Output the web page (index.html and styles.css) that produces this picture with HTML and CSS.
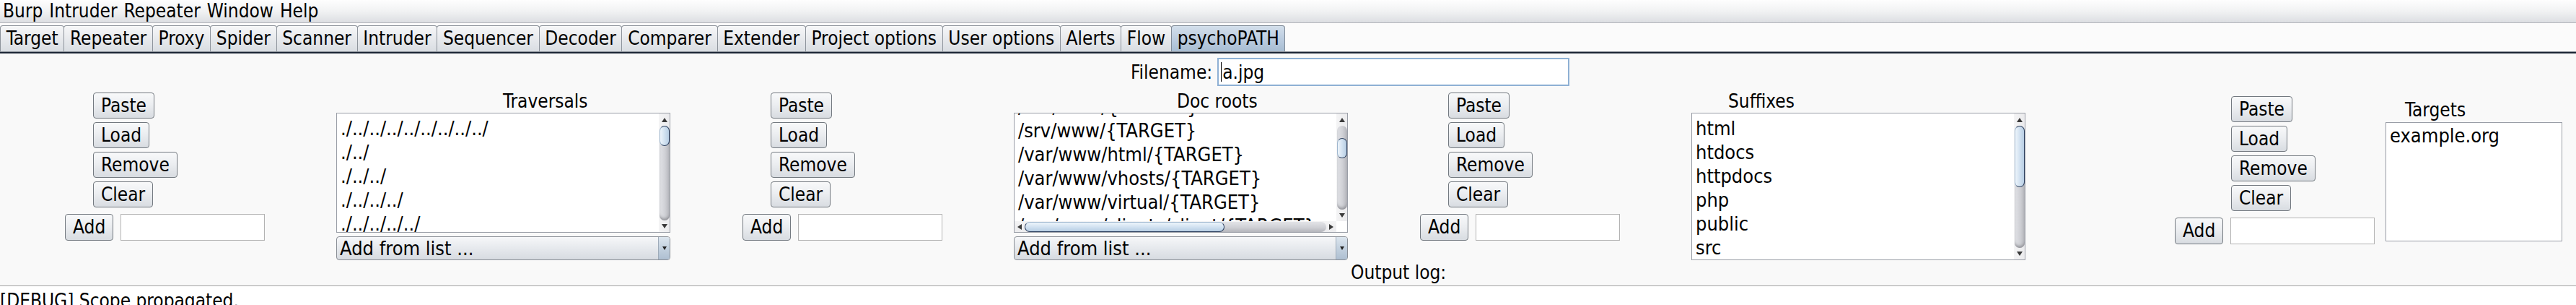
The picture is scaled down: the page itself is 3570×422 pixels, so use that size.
FILE: index.html
```html
<!DOCTYPE html>
<html lang="en">
<head>
<meta charset="utf-8">
<title>Burp Suite - psychoPATH</title>
<link rel="stylesheet" href="styles.css">
</head>
<body>
<div class="app">
  <nav class="menubar">
    <span>Burp</span><span>Intruder</span><span>Repeater</span><span>Window</span><span>Help</span>
  </nav>
  <div class="tabstrip">
    <div class="tab">Target</div>
    <div class="tab">Repeater</div>
    <div class="tab">Proxy</div>
    <div class="tab">Spider</div>
    <div class="tab">Scanner</div>
    <div class="tab">Intruder</div>
    <div class="tab">Sequencer</div>
    <div class="tab">Decoder</div>
    <div class="tab">Comparer</div>
    <div class="tab">Extender</div>
    <div class="tab">Project options</div>
    <div class="tab">User options</div>
    <div class="tab">Alerts</div>
    <div class="tab">Flow</div>
    <div class="tab active">psychoPATH</div>
  </div>
  <div class="tab-rule"></div>

  <main class="content">
    <div class="filename-row">
      <span class="filename-label">Filename:</span>
      <div class="field filename-field"><span class="caret"></span>a.jpg</div>
    </div>

    <div class="groups">
      <!-- Traversals -->
      <section class="group">
        <div class="controls">
          <div class="btn-stack">
            <div class="btn">Paste</div>
            <div class="btn">Load</div>
            <div class="btn">Remove</div>
            <div class="btn">Clear</div>
          </div>
          <div class="add-row"><div class="btn">Add</div><div class="field add-field"></div></div>
        </div>
        <div class="list-col">
          <div class="list-title title-traversals">Traversals</div>
          <div class="list list-v">
            <div class="items">
              <div class="item">./../../../../../../../../</div>
              <div class="item">./../</div>
              <div class="item">./../../</div>
              <div class="item">./../../../</div>
              <div class="item">./../../../../</div>
            </div>
            <div class="vscroll">
              <div class="arr up"></div>
              <div class="track"><div class="thumb" style="height:28px;margin-top:0px"></div></div>
              <div class="arr down"></div>
            </div>
          </div>
          <div class="combo"><span class="combo-text">Add from list ...</span><span class="combo-btn"></span></div>
        </div>
      </section>

      <!-- Doc roots -->
      <section class="group">
        <div class="controls">
          <div class="btn-stack">
            <div class="btn">Paste</div>
            <div class="btn">Load</div>
            <div class="btn">Remove</div>
            <div class="btn">Clear</div>
          </div>
          <div class="add-row"><div class="btn">Add</div><div class="field add-field"></div></div>
        </div>
        <div class="list-col">
          <div class="list-title title-docroots">Doc roots</div>
          <div class="list list-hv">
            <div class="items items-scrolled">
              <div class="item">/var/www/{TARGET}</div>
              <div class="item">/srv/www/{TARGET}</div>
              <div class="item">/var/www/html/{TARGET}</div>
              <div class="item">/var/www/vhosts/{TARGET}</div>
              <div class="item">/var/www/virtual/{TARGET}</div>
              <div class="item">/var/www/clients/client/{TARGET}</div>
            </div>
            <div class="vscroll">
              <div class="arr up"></div>
              <div class="track"><div class="thumb" style="height:28px;margin-top:17px"></div></div>
              <div class="arr down"></div>
            </div>
            <div class="hscroll">
              <div class="arr left"></div>
              <div class="htrack"><div class="hthumb" style="width:277px"></div></div>
              <div class="arr right"></div>
            </div>
            <div class="corner"></div>
          </div>
          <div class="combo"><span class="combo-text">Add from list ...</span><span class="combo-btn"></span></div>
        </div>
      </section>

      <!-- Suffixes -->
      <section class="group">
        <div class="controls">
          <div class="btn-stack">
            <div class="btn">Paste</div>
            <div class="btn">Load</div>
            <div class="btn">Remove</div>
            <div class="btn">Clear</div>
          </div>
          <div class="add-row"><div class="btn">Add</div><div class="field add-field"></div></div>
        </div>
        <div class="list-col">
          <div class="list-title title-suffixes">Suffixes</div>
          <div class="list list-v list-tall">
            <div class="items">
              <div class="item">html</div>
              <div class="item">htdocs</div>
              <div class="item">httpdocs</div>
              <div class="item">php</div>
              <div class="item">public</div>
              <div class="item">src</div>
            </div>
            <div class="vscroll">
              <div class="arr up"></div>
              <div class="track"><div class="thumb" style="height:85px;margin-top:0px"></div></div>
              <div class="arr down"></div>
            </div>
          </div>
        </div>
      </section>

      <!-- Targets -->
      <section class="group group-targets">
        <div class="controls controls-targets">
          <div class="btn-stack">
            <div class="btn">Paste</div>
            <div class="btn">Load</div>
            <div class="btn">Remove</div>
            <div class="btn">Clear</div>
          </div>
          <div class="add-row"><div class="btn">Add</div><div class="field add-field"></div></div>
        </div>
        <div class="list-col list-col-targets">
          <div class="list-title title-targets">Targets</div>
          <div class="list list-targets">
            <div class="items items-targets">
              <div class="item">example.org</div>
            </div>
          </div>
        </div>
      </section>
    </div>

    <div class="output-row">Output log:</div>
  </main>

  <div class="log">[DEBUG] Scope propagated.</div>
</div>
</body>
</html>
```

FILE: styles.css
```css
html, body {
  margin: 0;
  padding: 0;
}

body {
  width: 3570px;
  height: 422px;
  overflow: hidden;
  background: #f9f9f9;
  color: #000;
  font-family: "DejaVu Sans Condensed", "DejaVu Sans", sans-serif;
  font-size: 26px;
}

.app {
  display: flex;
  flex-direction: column;
  height: 422px;
}

/* ---------- menu bar ---------- */
.menubar {
  height: 31px;
  border-bottom: 1px solid #b4b7bc;
  background: linear-gradient(to bottom, #fefefe 0%, #f1f2f3 50%, #dcdee2 100%);
  display: flex;
  align-items: center;
  gap: 9px;
  padding-left: 4px;
  line-height: 31px;
}

/* ---------- tabs ---------- */
.tabstrip {
  height: 36px;
  padding-top: 3px;
  padding-left: 1px;
  background: #fbfbfb;
  border-bottom: 1px solid #8b9199;
  display: flex;
  align-items: flex-end;
}

.tab {
  height: 35px;
  line-height: 35px;
  padding: 0 7.7px;
  margin-left: -1px;
  border: 1px solid #8d939b;
  border-bottom: none;
  border-radius: 4px 4px 0 0;
  background: linear-gradient(to bottom, #f6f7f8 0%, #e9ebee 45%, #d9dde2 100%);
  white-space: nowrap;
}

.tab.active {
  background: linear-gradient(to bottom, #d3dfeb 0%, #bccde0 50%, #a8bdd2 100%);
  border-color: #7f8a97;
}

.tab-rule {
  height: 2px;
  background: #d6e0ea;
  border-bottom: 2px solid #1d2636;
}

/* ---------- content ---------- */
.content {
  height: 321px;
  border-bottom: 1px solid #a2a2a2;
  background: #f9f9f9;
  display: flex;
  flex-direction: column;
}

.filename-row {
  margin-top: 6px;
  height: 39px;
  padding-left: 1567px;
  display: flex;
  align-items: center;
  gap: 7px;
}

.field {
  box-sizing: border-box;
  background: #fff;
  border: 1px solid #b3b3b3;
}

.filename-field {
  width: 488px;
  height: 39px;
  border: 2px solid #8eb0d4;
  display: flex;
  align-items: center;
  padding-left: 3px;
  font-size: 26px;
}

.caret {
  width: 1px;
  height: 27px;
  background: #000;
  margin-right: 1px;
}

.groups {
  margin-top: 9px;
  height: 232px;
  padding-left: 90px;
  display: flex;
  align-items: flex-start;
  gap: 100px;
}

.group {
  display: flex;
  align-items: flex-start;
}

.controls {
  width: 376px;
  display: flex;
  flex-direction: column;
}

.btn-stack {
  padding-left: 39px;
  display: flex;
  flex-direction: column;
  align-items: flex-start;
  gap: 5px;
}

.btn {
  box-sizing: border-box;
  height: 36px;
  line-height: 34px;
  padding: 0 10px;
  border: 1px solid #737980;
  border-radius: 4px;
  background: linear-gradient(to bottom, #f8f9fa 0%, #eceef1 45%, #d8dce1 100%);
  white-space: nowrap;
}

.add-row {
  margin-top: 9px;
  display: flex;
  align-items: center;
  gap: 10px;
}

.add-row .btn {
  height: 37px;
  line-height: 35px;
}

.add-field {
  width: 200px;
  height: 37px;
}

/* ---------- lists ---------- */
.list-col {
  width: 463px;
  display: flex;
  flex-direction: column;
}

.list-title {
  line-height: 24px;
  height: 24px;
  white-space: nowrap;
}

.title-traversals { padding-left: 231px; }
.title-docroots { padding-left: 226px; }
.title-suffixes { padding-left: 51px; }
.title-targets { padding-left: 27px; margin-top: 7px; }

.list {
  box-sizing: border-box;
  margin-top: 4px;
  height: 166px;
  border: 1px solid #9a9ea7;
  background: #fff;
  overflow: hidden;
  font-size: 27px;
}

.list-v {
  display: grid;
  grid-template-columns: 1fr 15px;
}

.list-hv {
  display: grid;
  grid-template-columns: 1fr 15px;
  grid-template-rows: 1fr 15px;
}

.list-tall {
  height: 204px;
}

.items {
  overflow: hidden;
  padding: 4px 0 0 5px;
  min-width: 0;
  min-height: 0;
}

.items-scrolled {
  padding-top: 0;
}

.items-scrolled .item:first-child {
  margin-top: -26px;
}

.item {
  height: 33px;
  line-height: 33px;
  white-space: nowrap;
}

/* vertical scrollbar */
.vscroll {
  display: flex;
  flex-direction: column;
  align-items: center;
  background: linear-gradient(to right, #f4f4f5, #ebebed);
  min-height: 0;
}

.arr {
  flex: none;
  display: flex;
  align-items: center;
  justify-content: center;
}

.arr::before {
  content: "";
  width: 0;
  height: 0;
  border: 4px solid transparent;
}

.arr.up { height: 17px; }
.arr.down { height: 16px; }
.arr.up::before { border-bottom: 6px solid #3a3a3a; border-top-width: 0; }
.arr.down::before { border-top: 6px solid #3a3a3a; border-bottom-width: 0; }

.track {
  flex: 1;
  width: 14px;
  border-radius: 7px;
  background: linear-gradient(to right, #e2e3e7 0%, #cfd0d5 55%, #b4b5bb 100%);
  box-shadow: inset 0 -4px 4px -2px #8b8c92;
  display: flex;
  flex-direction: column;
}

.thumb {
  box-sizing: border-box;
  width: 14px;
  border: 1px solid #2f4260;
  border-left-color: #9fb7cf;
  border-radius: 7px;
  background: linear-gradient(to right, #eef5fb 0%, #d2e2f1 50%, #b7cde3 100%);
}

/* horizontal scrollbar */
.hscroll {
  display: flex;
  align-items: center;
  background: linear-gradient(to bottom, #f4f4f5, #ebebed);
}

.arr.left, .arr.right { width: 14px; height: 15px; }
.arr.left::before { border-right: 6px solid #3a3a3a; border-left-width: 0; }
.arr.right::before { border-left: 6px solid #3a3a3a; border-right-width: 0; }

.htrack {
  flex: 1;
  height: 14px;
  border-radius: 7px;
  background: linear-gradient(to bottom, #e2e3e7 0%, #cfd0d5 55%, #b4b5bb 100%);
  display: flex;
}

.hthumb {
  box-sizing: border-box;
  height: 14px;
  border: 1px solid #2f4260;
  border-top-color: #9fb7cf;
  border-radius: 7px;
  background: linear-gradient(to bottom, #eef5fb 0%, #d2e2f1 50%, #b7cde3 100%);
}

.corner {
  background: #fff;
}

/* combo box */
.combo {
  box-sizing: border-box;
  margin-top: 5px;
  height: 33px;
  border: 1px solid #898e95;
  border-radius: 4px;
  background: linear-gradient(to bottom, #f6f7f9 0%, #e6e9ed 50%, #d7dbe1 100%);
  display: flex;
  overflow: hidden;
}

.combo-text {
  flex: 1;
  padding-left: 4px;
  line-height: 31px;
  font-size: 27px;
  white-space: nowrap;
}

.combo-btn {
  width: 15px;
  border-left: 1px solid #9eabb9;
  background: linear-gradient(to bottom, #dce5ee 0%, #c3d1df 50%, #aebfd1 100%);
  display: flex;
  align-items: center;
  justify-content: center;
}

.combo-btn::before {
  content: "";
  width: 0;
  height: 0;
  border-left: 3px solid transparent;
  border-right: 3px solid transparent;
  border-top: 5px solid #222;
}

/* targets group */
.group-targets {
  margin-left: 107px;
  margin-top: 5px;
}

.controls-targets {
  width: 292px;
}

.controls-targets .btn-stack {
  padding-left: 78px;
}

.list-col-targets {
  width: 245px;
}

.list-targets {
  margin-top: 5px;
  height: 165px;
}

.items-targets {
  padding-top: 1px;
}

/* output */
.output-row {
  height: 35px;
  line-height: 35px;
  padding-left: 1872px;
  white-space: nowrap;
}

.log {
  flex: 1;
  background: #fff;
  padding-top: 5px;
  line-height: 30px;
  white-space: nowrap;
}
```
